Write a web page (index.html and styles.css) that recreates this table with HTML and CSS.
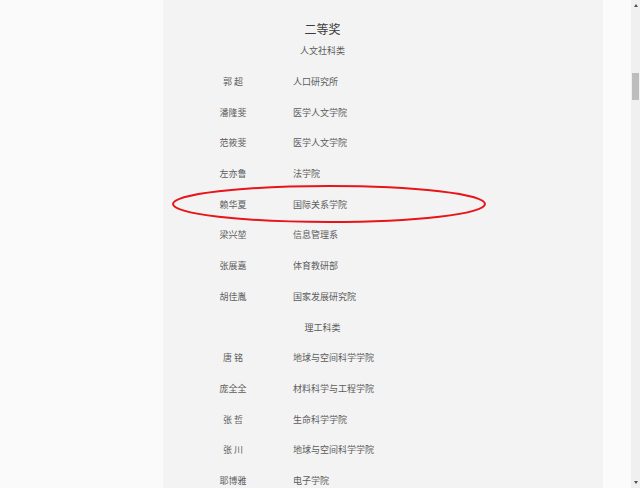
FILE: index.html
```html
<!DOCTYPE html>
<html lang="zh">
<head>
<meta charset="utf-8">
<link rel="stylesheet" href="styles.css">
</head>
<body>
<div class="page">
  <div class="side"></div>
  <main class="panel">
    <div class="content">
      <div class="title">二等奖</div>
      <div class="cat first">人文社科类</div>
      <div class="row"><span class="name">郭 超</span><span class="dept">人口研究所</span></div>
      <div class="row"><span class="name">潘隆斐</span><span class="dept">医学人文学院</span></div>
      <div class="row"><span class="name">范筱斐</span><span class="dept">医学人文学院</span></div>
      <div class="row"><span class="name">左亦鲁</span><span class="dept">法学院</span></div>
      <div class="row"><span class="name">赖华夏</span><span class="dept">国际关系学院</span></div>
      <div class="row"><span class="name">梁兴堃</span><span class="dept">信息管理系</span></div>
      <div class="row"><span class="name">张展嘉</span><span class="dept">体育教研部</span></div>
      <div class="row"><span class="name">胡佳胤</span><span class="dept">国家发展研究院</span></div>
      <div class="row cat">理工科类</div>
      <div class="row"><span class="name">唐 铭</span><span class="dept">地球与空间科学学院</span></div>
      <div class="row"><span class="name">庞全全</span><span class="dept">材料科学与工程学院</span></div>
      <div class="row"><span class="name">张 哲</span><span class="dept">生命科学学院</span></div>
      <div class="row"><span class="name">张 川</span><span class="dept">地球与空间科学学院</span></div>
      <div class="row"><span class="name">耶博雅</span><span class="dept">电子学院</span></div>
    </div>
    <svg class="mark" width="320" height="44" viewBox="0 0 320 44">
      <ellipse cx="160" cy="22" rx="156" ry="18" fill="none" stroke="#e8141a" stroke-width="2"/>
    </svg>
  </main>
  <div class="gap"></div>
  <div class="scrollbar">
    <div class="arrow up"></div>
    <div class="thumb"></div>
    <div class="track"></div>
    <div class="arrow down"></div>
  </div>
</div>
</body>
</html>
```
FILE: styles.css
```css
html, body {
  margin: 0;
  padding: 0;
  height: 488px;
  overflow: hidden;
  background: #fafafa;
  font-family: "Noto Sans CJK SC", "Noto Sans", sans-serif;
}
.page {
  display: flex;
  height: 488px;
}
.side {
  width: 163px;
  flex: none;
}
.panel {
  width: 440px;
  flex: none;
  background: #f3f3f3;
  position: relative;
  overflow: hidden;
}
.content {
  width: 279px;
  margin-left: 20px;
  padding-top: 16px;
  color: #5c5c5c;
  font-size: 9px;
}
.title {
  text-align: center;
  font-size: 12px;
  line-height: 26px;
  color: #3c3c3c;
}
.cat {
  text-align: center;
  font-size: 9px;
}
.cat.first {
  line-height: 18px;
  margin-bottom: 7px;
}
.row {
  display: grid;
  grid-template-columns: 100px 1fr;
  column-gap: 10px;
  height: 30.7px;
  line-height: 30.7px;
}
.row.cat {
  display: block;
}
.name {
  text-align: center;
}
.dept {
  text-align: left;
}
.mark {
  position: absolute;
  left: 6px;
  top: 182px;
}
.gap {
  width: 28px;
  flex: none;
  background: #fbfbfb;
}
.scrollbar {
  width: 9px;
  flex: none;
  background: #f0f0f0;
  display: flex;
  flex-direction: column;
  align-items: center;
}
.arrow {
  width: 0;
  height: 0;
  border-left: 2.5px solid transparent;
  border-right: 2.5px solid transparent;
}
.arrow.up {
  margin-top: 4px;
  border-bottom: 3px solid #505050;
}
.arrow.down {
  margin-bottom: 4px;
  border-top: 3px solid #505050;
}
.thumb {
  margin-top: 66px;
  width: 7px;
  height: 27px;
  background: #bdbdbd;
}
.track {
  flex: 1;
}
```
